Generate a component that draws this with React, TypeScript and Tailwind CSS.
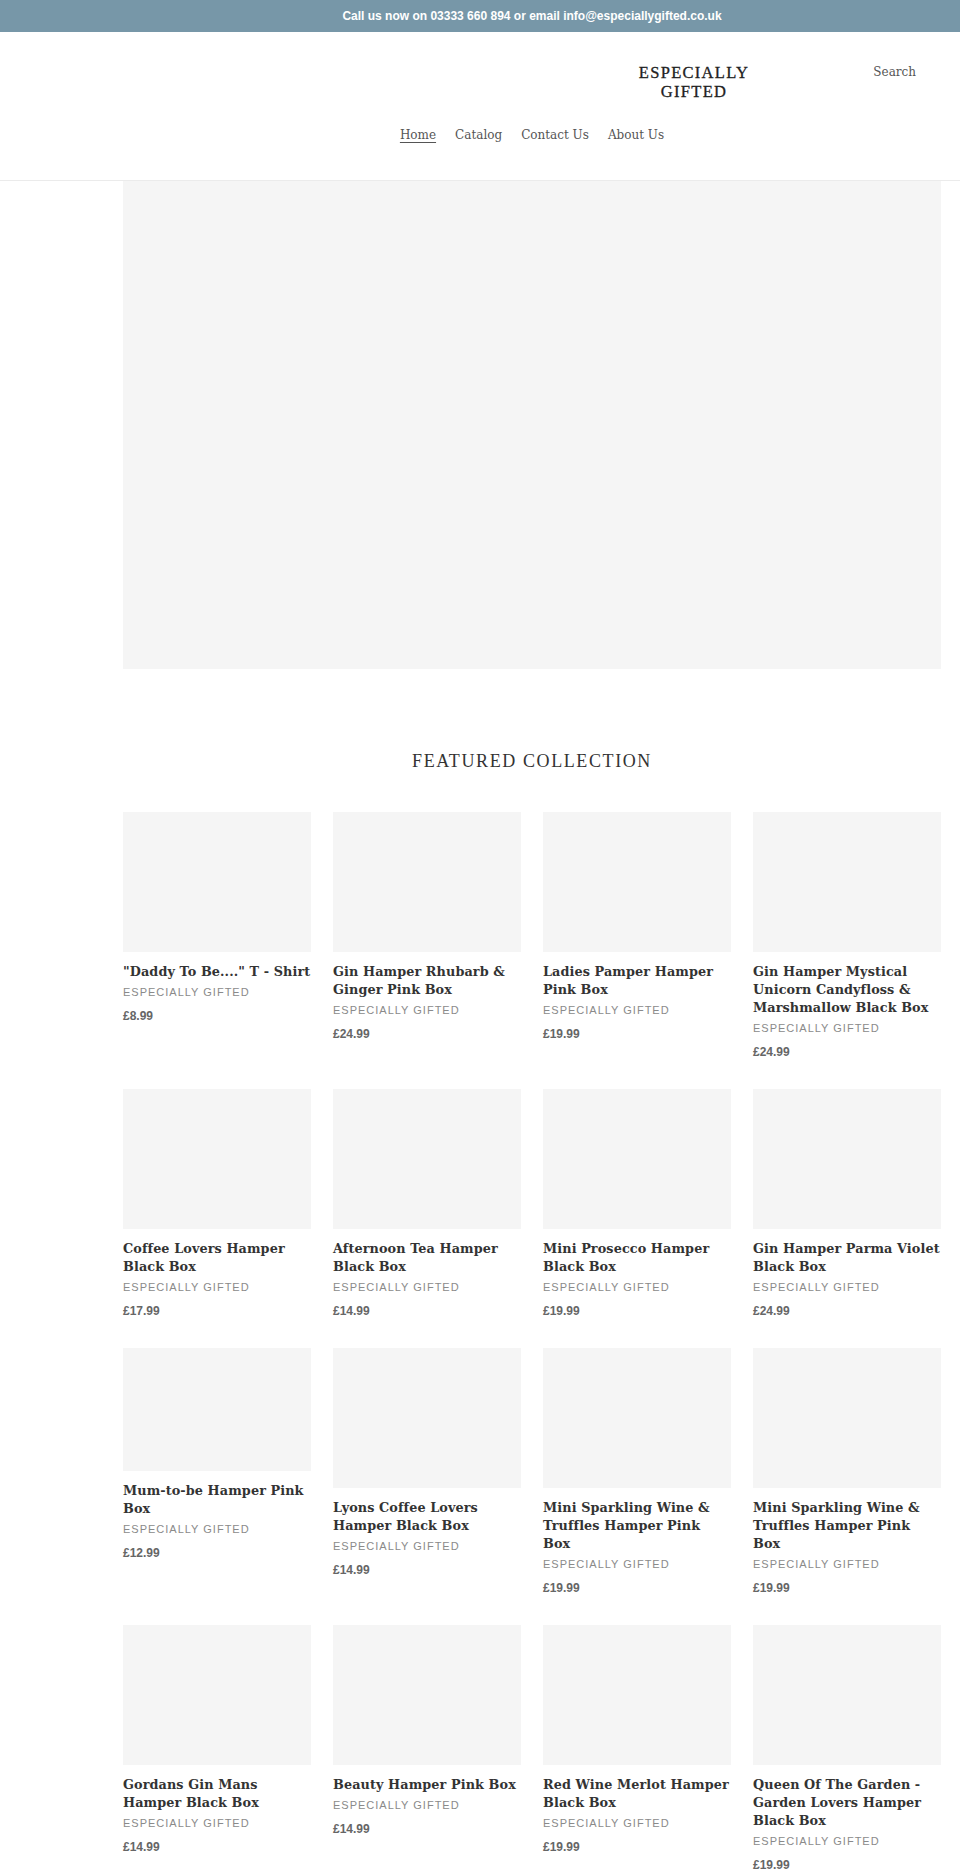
import React from 'react';

type Product = { title: string; price: string; imgH?: string };

const products: Product[] = [
  { title: '"Daddy To Be...." T - Shirt', price: '£8.99' },
  { title: 'Gin Hamper Rhubarb & Ginger Pink Box', price: '£24.99' },
  { title: 'Ladies Pamper Hamper Pink Box', price: '£19.99' },
  { title: 'Gin Hamper Mystical Unicorn Candyfloss & Marshmallow Black Box', price: '£24.99' },
  { title: 'Coffee Lovers Hamper Black Box', price: '£17.99' },
  { title: 'Afternoon Tea Hamper Black Box', price: '£14.99' },
  { title: 'Mini Prosecco Hamper Black Box', price: '£19.99' },
  { title: 'Gin Hamper Parma Violet Black Box', price: '£24.99' },
  { title: 'Mum-to-be Hamper Pink Box', price: '£12.99', imgH: 'h-[123px]' },
  { title: 'Lyons Coffee Lovers Hamper Black Box', price: '£14.99' },
  { title: 'Mini Sparkling Wine & Truffles Hamper Pink Box', price: '£19.99' },
  { title: 'Mini Sparkling Wine & Truffles Hamper Pink Box', price: '£19.99' },
  { title: 'Gordans Gin Mans Hamper Black Box', price: '£14.99' },
  { title: 'Beauty Hamper Pink Box', price: '£14.99' },
  { title: 'Red Wine Merlot Hamper Black Box', price: '£19.99' },
  { title: 'Queen Of The Garden - Garden Lovers Hamper Black Box', price: '£19.99' },
];

const navLinks = ['Home', 'Catalog', 'Contact Us', 'About Us'];

function ProductCard({ product }: { product: Product }) {
  return (
    <div className="flex flex-col">
      <div className={`w-full bg-[#f5f5f5] ${product.imgH ?? 'h-[140px]'}`} />
      <h3 className="mt-[11px] font-['DejaVu_Serif',serif] text-[12.8px] font-bold leading-[18px] tracking-[0.1px] text-[#333]">
        {product.title}
      </h3>
      <p className="mt-[3px] font-['Liberation_Sans',Arial,sans-serif] text-[11px] leading-[16px] tracking-[1px] text-[#8a8a8a]">
        ESPECIALLY GIFTED
      </p>
      <p className="mt-[8px] font-['Liberation_Sans',Arial,sans-serif] text-[12px] font-bold leading-[16px] text-[#666]">
        {product.price}
      </p>
    </div>
  );
}

export default function App() {
  return (
    <div className="min-h-screen bg-white">
      <div className="flex h-[32px] items-center bg-[#7797a8] pl-[123px] pr-[19px]">
        <p className="w-full text-center font-['Liberation_Sans',Arial,sans-serif] text-[12px] font-bold leading-[16px] text-white">
          Call us now on 03333 660 894 or email info@especiallygifted.co.uk
        </p>
      </div>

      <header className="border-b border-[#ebebeb] pt-[31px] pb-[36px]">
        <div className="ml-[123px] w-[818px]">
          <div className="flex items-start">
            <div className="w-[448px]" />
            <a className="w-[246px] text-center font-['Liberation_Serif','Times_New_Roman',serif] text-[16.5px] leading-[19px] tracking-[1.3px] text-[#222] [-webkit-text-stroke:0.3px_#222]">
              ESPECIALLY
              <br />
              GIFTED
            </a>
            <div className="flex-1 pr-[25px] text-right font-['DejaVu_Serif',serif] text-[12px] leading-[18px] text-[#555]">
              Search
            </div>
          </div>
          <nav className="mt-[25px] flex justify-center gap-[19px] font-['DejaVu_Serif',serif] text-[12px] leading-[18px] text-[#555]">
            {navLinks.map((link, i) => (
              <a key={link} className={i === 0 ? 'underline underline-offset-[3px] decoration-1' : ''}>
                {link}
              </a>
            ))}
          </nav>
        </div>
      </header>

      <main className="ml-[123px] w-[818px] pb-[40px]">
        <div className="h-[488px] w-full bg-[#f5f5f5]" />

        <h2 className="mt-[80px] mb-[39px] text-center font-['Liberation_Serif','Times_New_Roman',serif] text-[18px] leading-[24px] tracking-[1.6px] text-[#333]">
          FEATURED COLLECTION
        </h2>

        <div className="grid grid-cols-4 gap-x-[22px] gap-y-[29px]">
          {products.map((p, i) => (
            <ProductCard key={i} product={p} />
          ))}
        </div>
      </main>
    </div>
  );
}
